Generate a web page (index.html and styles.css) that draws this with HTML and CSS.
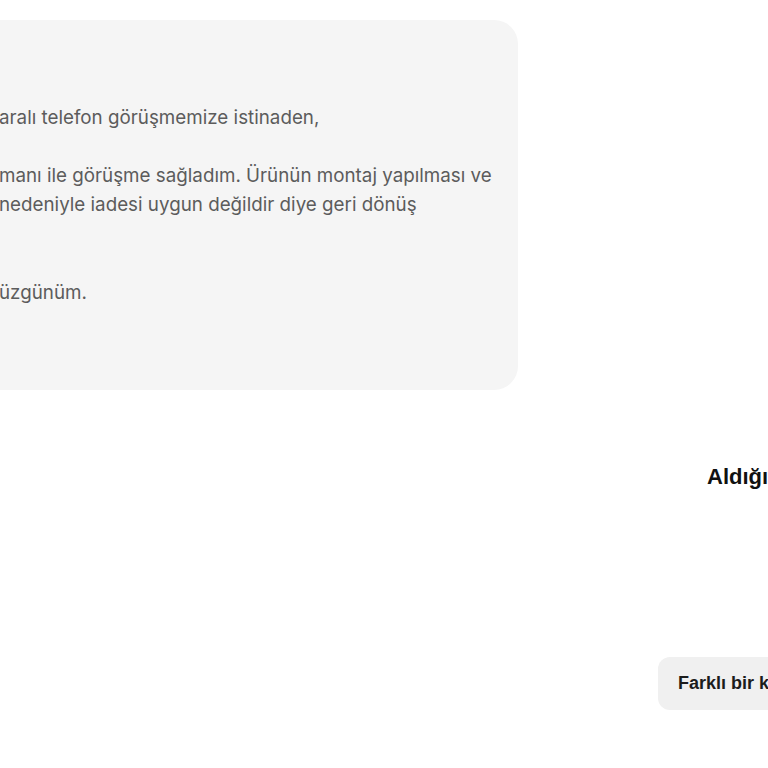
FILE: index.html
```html
<!DOCTYPE html>
<html lang="tr">
<head>
    <meta charset="UTF-8">
    <meta name="viewport" content="width=device-width, initial-scale=1.0">
    <title>Destek</title>
    <link rel="stylesheet" href="styles.css">
</head>
<body>
    <div class="thread">
        <div class="bubble">
            <p></p>
            <p>aralı telefon görüşmemize istinaden,</p>
            <p>manı ile görüşme sağladım. Ürünün montaj yapılması ve<br>nedeniyle iadesi uygun değildir diye geri dönüş<br>&nbsp;</p>
            <p>üzgünüm.</p>
            <p></p>
        </div>

        <div class="survey">
            <h2 class="survey-title">Aldığınız hizmetten memnun kaldınız mı?</h2>
            <div class="survey-actions">
                <button class="chip">Farklı bir konuda yardım almak istiyorum</button>
            </div>
        </div>
    </div>
</body>
</html>
```

FILE: styles.css
```css
body {
    margin: 0;
    background: #fff;
    font-family: Inter, 'Noto Sans', sans-serif;
    overflow: hidden;
}

.thread {
    padding-top: 20px;
}

/* mesaj balonu, sol taraftan taşıyor */
.bubble {
    width: 495px;
    margin-left: -25px;
    padding: 24px;
    background: #f5f5f5;
    border-radius: 24px;
    color: #5c5c5c;
    font-size: 18.8px;
    line-height: 29.25px;
    white-space: nowrap;
}

.bubble p {
    margin: 0;
    min-height: 29.25px;
}

.bubble p + p {
    margin-top: 29.25px;
}

.survey {
    margin-left: 658px;
    margin-top: 73px;
    white-space: nowrap;
    font-family: 'Liberation Sans', Arial, sans-serif;
}

.survey-title {
    margin: 0;
    padding-left: 49px;
    font-size: 22px;
    line-height: 28px;
    font-weight: 700;
    color: #111;
}

.survey-actions {
    margin-top: 166px;
    display: flex;
}

.chip {
    background: #f0f0f0;
    border: none;
    border-radius: 12px;
    padding: 16px 20px;
    font-family: inherit;
    font-size: 18px;
    font-weight: 700;
    line-height: 21px;
    color: #1c1c1c;
    white-space: nowrap;
}
```
